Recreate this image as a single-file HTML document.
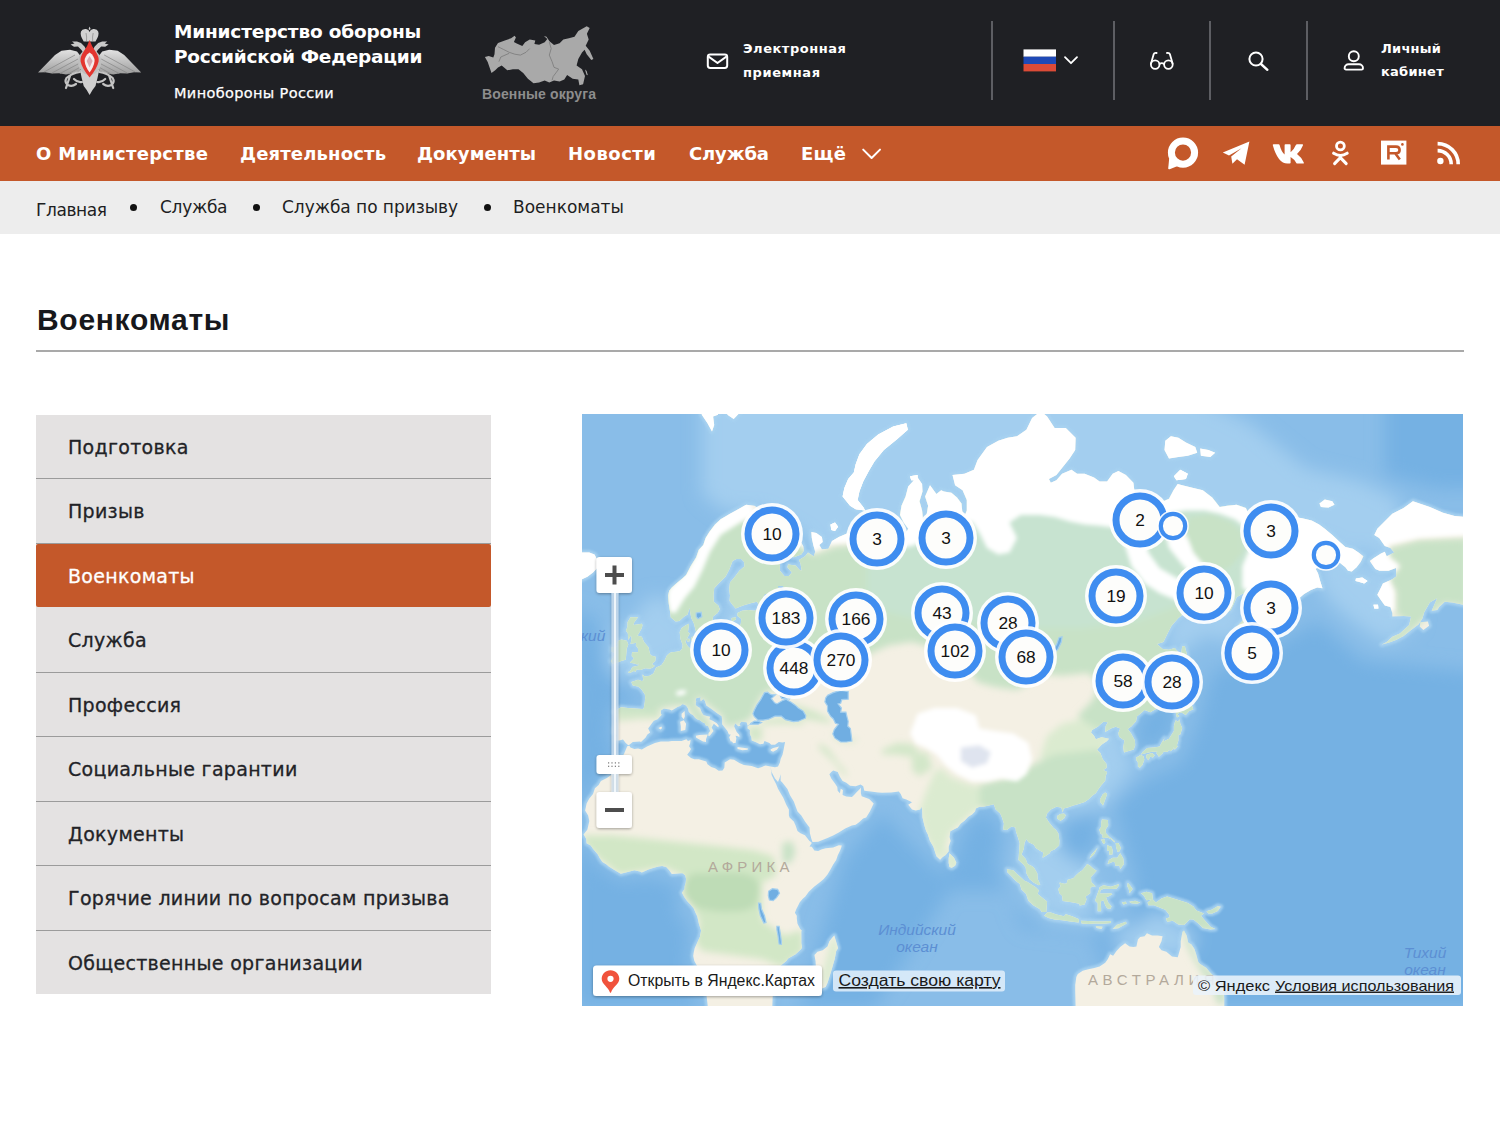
<!DOCTYPE html>
<html lang="ru">
<head>
<meta charset="utf-8">
<title>Военкоматы</title>
<style>
*{box-sizing:border-box;margin:0;padding:0}
html,body{width:1500px;height:1125px;overflow:hidden;background:#fff}
body{font-family:"DejaVu Sans","Liberation Sans",sans-serif;color:#1d1e22;position:relative}
.abs{position:absolute;white-space:nowrap}
#top{position:absolute;left:0;top:0;width:1500px;height:126px;background:#1f2024}
#nav{position:absolute;left:0;top:126px;width:1500px;height:55px;background:#c4582a}
#crumbs{position:absolute;left:0;top:181px;width:1500px;height:53px;background:#ededed}
.t{position:absolute;white-space:nowrap;line-height:1;transform-origin:0 0}
.w{color:#fff}
.bul{position:absolute;top:22.5px;width:7px;height:7px;border-radius:50%;background:#111}
.vsep{position:absolute;top:21px;width:1.6px;height:79px;background:#5d5e63}
#side{position:absolute;left:36px;top:414.7px;width:454.5px;height:579px;background:#e4e2e2}
#side .it{position:absolute;left:0;width:454.5px;height:64.5px;border-bottom:1px solid #9b9b9b}
#side .it.act{background:#c4582a;border-bottom:none;border-radius:2px;height:63.6px}
#side .it span{position:absolute;left:32px;top:23.3px;font-size:19px;line-height:1;letter-spacing:.3px;color:#222327;white-space:nowrap;-webkit-text-stroke:.3px currentColor}
#side .it.act span{color:#fff}
#map{position:absolute;left:582px;top:414px;width:881px;height:592px;overflow:hidden;background:#8fc0e6}
</style>
</head>
<body>
<div id="top">
<!--HDR--><svg width="1500" height="126" viewBox="0 0 1500 126" style="position:absolute;left:0;top:0">
<defs><linearGradient id="sg" x1="0" y1="0" x2="0" y2="1"><stop offset="0" stop-color="#e2e2e2"/><stop offset="1" stop-color="#9c9c9c"/></linearGradient></defs>
<g id="emb">
<path d="M80.5 56 L77 51.5 L70 49.8 L61.5 50.8 L55 55 L38 72.6 L45 72.2 L52 73.6 L59 73.2 L66 74.6 L73 73.2 L80 71Z" fill="url(#sg)"/>
<g transform="translate(179.2,0) scale(-1,1)"><path d="M80.5 56 L77 51.5 L70 49.8 L61.5 50.8 L55 55 L38 72.6 L45 72.2 L52 73.6 L59 73.2 L66 74.6 L73 73.2 L80 71Z" fill="url(#sg)"/></g>
<path d="M75 55 L44 72 M78 59 L52 73 M80 63 L60 73.5 M80.5 67 L68 74" stroke="#8a8a8a" stroke-width=".8" fill="none"/>
<g transform="translate(179.2,0) scale(-1,1)"><path d="M75 55 L44 72 M78 59 L52 73 M80 63 L60 73.5 M80.5 67 L68 74" stroke="#8a8a8a" stroke-width=".8" fill="none"/></g>
<path d="M85 56 L81.5 50 L78 46.5 L74 46.8 L70.6 44.4 L74.5 43.6 L72 41.6 L77 41.4 L81 43 L84.5 46.5 L87.5 52Z" fill="#c9c9c9"/>
<g transform="translate(179.2,0) scale(-1,1)"><path d="M85 56 L81.5 50 L78 46.5 L74 46.8 L70.6 44.4 L74.5 43.6 L72 41.6 L77 41.4 L81 43 L84.5 46.5 L87.5 52Z" fill="#c9c9c9"/></g>
<path d="M89.6 26.5 L90.6 29 L89.6 30 L88.6 29Z M81 31.5 Q82 28.6 86 29 Q89 29.6 89.6 32 Q90.2 29.6 93.2 29 Q97.2 28.6 98.2 31.5 Q99.6 35 95.5 41.4 L83.7 41.4 Q79.6 35 81 31.5Z" fill="#d2d2d2"/>
<path d="M86 33 Q87 37 86.5 41 M93.2 33 Q92.2 37 92.7 41" stroke="#8f8f8f" stroke-width=".8" fill="none"/>
<path d="M80 70 L99.2 70 L97.5 78 L95.5 86 L92.5 90 L89.6 95 L86.7 90 L83.7 86 L81.7 78Z" fill="#cfcfcf"/>
<path d="M80 72 Q72 73 66.5 78 Q64 82 68 85 Q72 87 76 84 M70 76 L66 88 M74 79 Q78 83 82 82" stroke="#c4c4c4" stroke-width="2.2" fill="none" stroke-linecap="round"/>
<g transform="translate(179.2,0) scale(-1,1)"><path d="M80 72 Q72 73 66.5 78 Q64 82 68 85 Q72 87 76 84 M70 76 L66 88 M74 79 Q78 83 82 82" stroke="#c4c4c4" stroke-width="2.2" fill="none" stroke-linecap="round"/></g>
<ellipse cx="89.6" cy="62" rx="11.5" ry="13" fill="#bfbfbf"/>
<path d="M89.6 40 Q91.5 46 95.5 51.5 Q99.4 57 98.6 61.5 Q97.3 68 89.6 77.6 Q81.9 68 80.6 61.5 Q79.8 57 83.7 51.5 Q87.7 46 89.6 40Z" fill="#e3352f"/>
<path d="M89.6 52.5 Q94.6 56 94.6 61 Q94 66.5 89.6 72.6 Q85.2 66.5 84.6 61 Q84.6 56 89.6 52.5Z" fill="#f4ecec"/>
<path d="M89.6 56 L92.6 61 L89.6 67.5 L86.6 61Z" fill="#d9a9b0"/>
</g>
<polygon points="484.9,57.0 488.7,56.1 493.3,57.5 494.5,54.2 495.0,47.7 498.0,43.0 505.5,40.2 511.1,38.3 514.6,35.7 515.9,37.4 513.9,42.1 516.7,43.5 522.3,46.0 525.1,42.3 529.7,39.5 535.3,40.4 534.4,43.9 539.1,44.7 544.7,42.3 547.3,39.1 543.9,36.1 546.5,36.7 549.5,41.3 554.0,45.1 559.6,43.2 563.3,39.5 568.9,38.3 574.5,36.7 578.3,31.1 586.7,26.2 589.7,28.1 586.9,33.7 588.7,39.5 585.7,45.8 589.7,50.7 593.4,58.9 591.3,60.0 586.7,54.2 584.6,49.7 582.0,52.5 578.3,58.9 576.6,65.4 582.0,69.3 585.0,75.9 583.1,84.3 579.4,85.2 578.3,79.6 572.7,78.7 567.1,74.9 564.3,79.6 559.6,81.5 554.0,80.5 549.3,82.4 544.7,80.5 539.1,82.4 533.5,83.3 527.9,78.7 523.2,73.1 518.5,69.3 512.9,69.3 507.3,70.3 501.7,65.6 498.0,67.5 495.2,70.3 491.5,73.1 489.6,67.5 487.7,61.9" fill="#a9a9a9"/>
<polygon points="585.0,69.6 586.7,71.0 587.8,75.2 586.5,74.7" fill="#a9a9a9"/>
<polyline points="498.0,46.7 503.6,49.5 509.2,52.3 514.8,54.2 520.4,55.1 526.0,52.3 529.7,48.6" fill="none" stroke="#7f7f7f" stroke-width=".9"/>
<polyline points="498.9,61.7 500.8,57.0 509.2,53.3" fill="none" stroke="#7f7f7f" stroke-width=".9"/>
<polyline points="549.3,42.1 551.2,48.6 549.3,55.1 552.1,61.7 554.0,67.3 558.7,69.1 555.9,72.9 553.1,76.6 552.1,80.3" fill="none" stroke="#7f7f7f" stroke-width=".9"/>
<rect x="707.8" y="54.6" width="19.4" height="13.4" rx="2.4" fill="none" stroke="#fff" stroke-width="2"/><path d="M708.6 56.6 L717.5 63 L726.4 56.6" fill="none" stroke="#fff" stroke-width="2" stroke-linejoin="round"/>
<rect x="1023.5" y="49.4" width="32.5" height="7.4" fill="#fff"/><rect x="1023.5" y="56.7" width="32.5" height="7.4" fill="#1f49b6"/><rect x="1023.5" y="64" width="32.5" height="7.4" fill="#dc4b37"/>
<path d="M1065 57.2 L1071 63.2 L1077 57.2" fill="none" stroke="#fff" stroke-width="1.8" stroke-linecap="round" stroke-linejoin="round"/>
<g fill="none" stroke="#fff" stroke-width="1.8" stroke-linecap="round"><circle cx="1155.2" cy="64.6" r="4.3"/><circle cx="1168.4" cy="64.6" r="4.3"/><path d="M1159.5 64 Q1161.8 62.4 1164.1 64"/><path d="M1151 63.6 L1153.6 54.4 Q1154.2 52.6 1156.6 53"/><path d="M1172.6 63.6 L1170 54.4 Q1169.4 52.6 1167 53"/></g>
<circle cx="1256" cy="59" r="6.6" fill="none" stroke="#fff" stroke-width="2"/><path d="M1261 64 L1267.4 69.8" stroke="#fff" stroke-width="2.4" stroke-linecap="round"/>
<circle cx="1353.8" cy="56.2" r="5" fill="none" stroke="#fff" stroke-width="1.9"/><path d="M1348.6 64.2 h10.4 a4 4 0 0 1 4 4 v0 a1.4 1.4 0 0 1 -1.4 1.4 h-15.6 a1.4 1.4 0 0 1 -1.4 -1.4 v0 a4 4 0 0 1 4 -4z" fill="none" stroke="#fff" stroke-width="1.9"/>
</svg><!--/HDR-->
  <div class="t w" id="h1a" style="left:174px;top:22.6px;font-size:18.5px;font-weight:bold;letter-spacing:-.19px">Министерство обороны</div>
  <div class="t w" id="h1b" style="left:174px;top:48.3px;font-size:18.5px;font-weight:bold;letter-spacing:-.27px">Российской Федерации</div>
  <div class="t w" id="h2" style="left:174px;top:85.5px;font-size:14.5px;letter-spacing:.35px;-webkit-text-stroke:.25px #fff">Минобороны России</div>
  <div class="t" id="vo" style="left:482px;top:87px;font-size:14px;font-weight:bold;color:#8d8d8d;font-family:'Liberation Sans',sans-serif;letter-spacing:.13px">Военные округа</div>
  <div class="t w" id="ep1" style="left:743px;top:42px;font-size:13px;font-weight:bold;letter-spacing:.54px">Электронная</div>
  <div class="t w" id="ep2" style="left:743px;top:66px;font-size:13px;font-weight:bold;letter-spacing:.58px">приемная</div>
  <div class="vsep" style="left:991px"></div>
  <div class="vsep" style="left:1113px"></div>
  <div class="vsep" style="left:1209px"></div>
  <div class="vsep" style="left:1306px"></div>
  <div class="t w" id="lk1" style="left:1381px;top:42px;font-size:13px;font-weight:bold;letter-spacing:.26px">Личный</div>
  <div class="t w" id="lk2" style="left:1381px;top:65px;font-size:13px;font-weight:bold;letter-spacing:.26px">кабинет</div>
</div>
<div id="nav">
<!--NAV--><svg width="1500" height="55" viewBox="0 126 1500 55" style="position:absolute;left:0;top:0">
<path d="M863.2 149.6 L871.6 158 L880 149.6" fill="none" stroke="#fff" stroke-width="2" stroke-linecap="round" stroke-linejoin="round"/>
<circle cx="1183" cy="152.6" r="11.6" fill="none" stroke="#fff" stroke-width="7"/><path d="M1169.2 158 L1168.2 168.6 Q1168.4 169.6 1169.6 169.2 L1179 165.6Z" fill="#fff"/>
<path d="M1222.8 152.4 L1249.400 141.6 L1244.600 164.8 L1237 159.2 L1232.400 163.8 L1231.200 156.600 L1241.500 148.200 L1229 155.400Z" fill="#fff"/>
<path d="M1273 144.2 h5.6 q.8 0 1 .8 q1.6 6.4 5 9.6 v-9.6 q0 -.8 .8 -.8 h4.4 q.8 0 .8 .8 v7.2 q3.4-2.6 5.4-7.4 q.3-.6 1-.6 h5.2 q1.2 0 .8 1.1 q-1.6 4.6-6 8.7 q4.8 3.6 6.8 8.4 q.4 1.2 -.8 1.2 h-5.6 q-.8 0 -1.1 -.6 q-2 -3.8 -5.7 -6 v5.8 q0 .8 -.8 .8 h-2.4 q-9.400 0 -14.600 -18.400 q-.3 -1 .8 -1z" fill="#fff"/>
<circle cx="1340.4" cy="146" r="3.9" fill="none" stroke="#fff" stroke-width="2.8"/><path d="M1333.6 153.2 Q1340.4 157.6 1347.2 153.2 M1340.4 156 L1340.4 158.4 M1340.4 157.6 L1334.6 163.6 M1340.4 157.6 L1346.200 163.6" fill="none" stroke="#fff" stroke-width="3" stroke-linecap="round"/>
<rect x="1381" y="140.6" width="25.4" height="24" fill="#fff"/><path d="M1388.4 159.4 V146.6 H1396 Q1399.6 146.6 1399.6 150 Q1399.6 153.2 1396 153.2 H1388.4 M1395.4 153.4 L1399.8 159.4" fill="none" stroke="#c4582a" stroke-width="2.6"/><circle cx="1402.400" cy="144.4" r="1.3" fill="#c4582a"/>
<circle cx="1440.400" cy="161" r="3.2" fill="#fff"/><path d="M1437.600 150.6 A13.6 13.6 0 0 1 1451.200 164.2 M1437.600 143.6 A20.600 20.600 0 0 1 1458.200 164.2" fill="none" stroke="#fff" stroke-width="3.6"/>
</svg><!--/NAV-->
  <div class="t w" id="n1" style="left:36px;top:19px;font-size:18px;font-weight:bold;letter-spacing:.3px">О Министерстве</div>
  <div class="t w" id="n2" style="left:240px;top:19px;font-size:18px;font-weight:bold;letter-spacing:.16px">Деятельность</div>
  <div class="t w" id="n3" style="left:417px;top:19px;font-size:18px;font-weight:bold;letter-spacing:.07px">Документы</div>
  <div class="t w" id="n4" style="left:568px;top:19px;font-size:18px;font-weight:bold;letter-spacing:.5px">Новости</div>
  <div class="t w" id="n5" style="left:689px;top:19px;font-size:18px;font-weight:bold;letter-spacing:-.15px">Служба</div>
  <div class="t w" id="n6" style="left:801px;top:19px;font-size:18px;font-weight:bold;letter-spacing:.3px">Ещё</div>
</div>
<div id="crumbs">
  <div class="t" id="c1" style="left:36px;top:21px;font-size:17px;letter-spacing:-.4px">Главная</div>
  <div class="bul" style="left:129.5px"></div>
  <div class="t" id="c2" style="left:160px;top:18px;font-size:17px;letter-spacing:-.3px">Служба</div>
  <div class="bul" style="left:252.5px"></div>
  <div class="t" id="c3" style="left:282px;top:18px;font-size:17px;letter-spacing:-.05px">Служба по призыву</div>
  <div class="bul" style="left:483.5px"></div>
  <div class="t" id="c4" style="left:513px;top:18px;font-size:17px">Военкоматы</div>
</div>
<div class="t" id="title" style="left:37px;top:305px;font-size:30px;font-weight:bold;color:#17181c;font-family:'Liberation Sans',sans-serif;letter-spacing:.7px">Военкоматы</div>
<div class="abs" style="left:36px;top:350px;width:1428px;height:2px;background:#a9a9a9"></div>
<div id="side">
  <div class="it" style="top:0"><span id="s1">Подготовка</span></div>
  <div class="it" style="top:64.5px"><span id="s2">Призыв</span></div>
  <div class="it act" style="top:129.0px"><span id="s3">Военкоматы</span></div>
  <div class="it" style="top:193.5px"><span id="s4">Служба</span></div>
  <div class="it" style="top:258.0px"><span id="s5">Профессия</span></div>
  <div class="it" style="top:322.5px"><span id="s6">Социальные гарантии</span></div>
  <div class="it" style="top:387.0px"><span id="s7">Документы</span></div>
  <div class="it" style="top:451.5px"><span id="s8">Горячие линии по вопросам призыва</span></div>
  <div class="it" style="top:516.0px;height:63px;border-bottom:none"><span id="s9">Общественные организации</span></div>
</div>
<div id="map">
<svg width="881" height="592" viewBox="582 414 881 592" style="position:absolute;left:0;top:0;display:block" font-family="'Liberation Sans',sans-serif">
<defs>
<filter id="b2" x="-10%" y="-10%" width="120%" height="120%"><feGaussianBlur stdDeviation="2"/></filter>
<filter id="b3" x="-10%" y="-10%" width="120%" height="120%"><feGaussianBlur stdDeviation="3.5"/></filter>
<filter id="b8" x="-20%" y="-20%" width="140%" height="140%"><feGaussianBlur stdDeviation="9"/></filter>
<filter id="b1" x="-10%" y="-10%" width="120%" height="120%"><feGaussianBlur stdDeviation="1.2"/></filter>
<filter id="sh" x="-20%" y="-20%" width="140%" height="150%"><feGaussianBlur in="SourceAlpha" stdDeviation="1.5"/><feOffset dy="1"/><feComponentTransfer><feFuncA type="linear" slope=".35"/></feComponentTransfer><feMerge><feMergeNode/><feMergeNode in="SourceGraphic"/></feMerge></filter>
<path id="land" d="M628.3,745.2 625.7,742.9 623,739.6 619.3,740.6 615.5,740.6 616.3,734.9 614,732.5 614.4,728.6 616.7,720.7 615.9,715.2 614.4,711.7 617.8,709.1 621.2,707.3 627.9,708 635,708.6 642.5,709.1 643.7,708.6 644.8,702.3 645.2,697.5 644.8,694.3 641,688.8 638,686.6 632.8,685.5 631.3,682.1 638,679.8 641.8,681 643.3,680.4 642.5,674.6 644.8,676.4 649.7,675.8 653.4,673.5 655.3,669.4 656.1,667.6 661.3,665.2 664.3,661 666.9,655.4 669.6,652.9 671.8,652.3 676.3,651.7 680.1,651 681.9,649.1 682.7,645.3 681.6,642 680.4,638.7 679.7,632 681.6,627.9 686.1,625.1 689.1,623.7 688,632 689.8,633.4 686.8,638.7 685.3,642 687.6,645.9 690.2,648.5 694.7,647.2 700,645.3 703,648.5 711.2,645.3 718,643.3 719.1,645.9 724.3,644 728.5,637.4 728.1,632 730,625.8 734.1,623.7 736.7,627.9 739.4,628.6 740.9,623 741.2,618.8 737.5,615.9 737.5,613 742,610.8 748.7,610 754.4,610.8 760,607.8 762.6,607.8 759.2,605.5 757,601.7 750.6,603.3 743.1,605.5 735.6,608.6 731.9,604 729.6,601 730,595.5 729.2,589.2 730,582.6 734.9,576.7 739.4,570.7 744.6,566.3 743.9,561.8 741.2,559.1 736.4,559.1 732.6,560.9 729.2,569.8 725.5,576.7 719.5,582.6 714.2,588.3 713.5,595.5 713.8,601.7 718.3,605.5 719.8,609.3 717.6,613 713.1,616.6 712,623 710.8,630.7 707.8,634.1 704.1,634.7 702.6,639.4 698.1,639.4 697,635.4 696.2,632.7 694,623.7 691.3,618.1 690.6,614.4 689.5,607.8 687.6,614.4 684.2,616.6 679.3,620.9 675.6,621.6 670.7,617.3 670.3,613 668.8,604 668.1,595.5 669.2,590.8 671.8,587.5 677.4,582.6 682.3,578.4 686.1,575 690.6,566.3 696.2,557.3 698.8,549.8 703.3,545 705.6,538 709.3,532 715,524.6 720.6,519.3 726.2,516 730,513.8 738.2,509.3 746.1,504.7 754.4,505.8 760,509.3 765.6,512.7 760,518.2 765.6,520.4 771.3,520.4 775,523.6 784.4,526.8 791.9,533 798.3,538 803.2,545.9 803.9,550.7 801.3,554.5 793.8,557.3 786.3,554.5 780.6,551.7 776.1,549.8 771.3,546.9 773.9,552.6 776.9,557.3 779.9,564.5 779.9,570.7 784.4,575.9 788.9,575.9 791.9,572.4 787.4,567.2 788.1,564.5 795.6,565.4 799.4,569.8 801.7,570.7 800.5,563.6 799,560 805,556.3 808,552.6 813.7,556.3 815.2,551.7 813.3,545 811.8,538 811.4,532 816.3,533 821.9,537 822.7,542 819.3,545 821.9,549.3 828.3,548.8 832,541 838.8,537 848.2,533 851.9,536 855.7,533 863.2,532 870.7,528.8 876.3,520.4 874.4,517.1 880.1,519.3 891.3,524.6 895.1,528.3 900,532 904.5,535 908.2,528.8 903.7,522.5 900,514.9 901.5,505.8 905.6,496.4 908.2,486.6 913.9,480.2 917.6,477.6 922.1,484.1 922.5,491.6 919.5,501.2 922.1,510.4 923.2,521.4 925.9,529.9 924,536 920.6,545 917.6,549.8 920.6,552.6 925.1,547.9 929.2,540 930,532 934.5,527.8 940.1,533 942,541 945,541 944.2,532 940.1,525.7 935.6,520.4 927.7,524.6 926.2,517.1 928.1,505.8 925.1,496.4 930,485.3 936.4,494 941.2,490.3 943.9,491.6 951.4,492.8 957,497.6 961.5,503.5 962.3,511.5 964.5,516 966.8,510.4 966.8,500 962.6,490.3 955.1,485.3 952.5,475 964.5,473.7 973.9,469.7 977.6,460 987,446.9 998.3,440.8 1007.7,437.7 1017,436.2 1026.4,429.8 1032.1,418.1 1040.7,411.2 1047.1,416.4 1054.6,428.1 1065.8,428.1 1075.6,437.7 1075.2,449.9 1069.6,458.6 1064,465.6 1056.4,475 1048.9,478.9 1050.8,482.8 1056.4,480.2 1062.1,473.7 1071.5,469.7 1077.1,473.7 1084.6,473.7 1094,477.6 1099.6,481.5 1107.1,481.5 1112.7,473.7 1118.4,471 1125.9,475 1133.4,482.8 1134.5,491.6 1131.5,497.6 1135.2,503.5 1140.9,507 1145.4,500 1150.3,500 1155.9,498.8 1163.4,501.2 1169,498.8 1173.5,490.3 1177.7,484.1 1182.2,485.3 1193.4,487.9 1202.8,490.3 1212.2,497.6 1219.7,507 1227.2,505.8 1236.6,504.7 1245.9,508.1 1251.6,520.4 1257.2,521.4 1264.7,520.4 1274.1,522.5 1280.8,517.1 1285.3,521.4 1288,527.8 1290.2,519.3 1294.7,517.1 1302.2,518.2 1311.6,520.4 1319.1,524.6 1324.8,528.8 1332.3,535 1339.8,542 1345.4,546.9 1352.9,548.8 1358.5,552.6 1363.4,556.3 1360.8,561.8 1356.6,567.2 1351.8,571.6 1348,570.7 1345.4,567.2 1339.8,562.7 1334.1,561.8 1330.4,555.4 1327.8,553.5 1325.9,560.9 1321,564.5 1315.7,569 1318,573.3 1320.2,580.9 1322.5,588.3 1317.2,587.5 1310.9,590 1304.1,594 1297.7,599.4 1292.9,604 1288.4,607.8 1281.6,603.3 1273.3,606.3 1267.7,607.8 1262.5,613 1260.6,620.9 1258,623 1261,628.6 1262.1,634.1 1258,635.4 1256.8,642 1250.8,647.2 1249.3,653.6 1244.8,655.4 1243.3,661.6 1240.3,665.2 1237.3,667.6 1235.4,661 1233.6,648.5 1233.6,635.4 1236.9,626.5 1242.2,620.9 1248.6,610.8 1255.3,603.3 1261,595.5 1267,587.5 1262.1,588.3 1259.1,594.7 1252,601.7 1249.7,595.5 1250.8,592.4 1242.2,594 1236.9,597.1 1230.9,610 1224.6,613.7 1215.2,610 1208.4,610.8 1197.2,612.3 1186.7,611.5 1178.4,618.1 1171.6,625.8 1167.9,632.7 1163.4,642 1157,644 1162.6,649.1 1169,649.8 1174.7,647.9 1179.5,653.6 1178.8,659.1 1177.3,665.2 1176.2,672.9 1175.8,678.7 1171.6,686.6 1169,692.1 1163.4,698.6 1159.6,703.9 1155.9,709.1 1150.3,712.2 1144.6,710.1 1140.9,713.2 1137.1,716.2 1136,721.2 1131.5,726.2 1127.7,729.1 1131.1,733.4 1134.9,740.6 1135.2,745.2 1133.7,749.4 1129.6,750.8 1124,752.6 1123.2,747.5 1124.4,740.6 1119.1,736.8 1118.4,733 1120.2,728.6 1115.7,726.7 1110.9,728.6 1105.2,732 1105.6,726.2 1107.9,722.2 1103.4,721.7 1097.7,726.7 1092.1,730.1 1091,732.5 1094,735.8 1095.8,739.2 1101.5,737.3 1109,738.7 1107.1,741 1101.5,744.8 1097,749.8 1100.4,753 1102.6,758.9 1106.4,763.8 1106.7,767.7 1103.4,769.9 1107.1,772.1 1105.6,776.4 1105.2,780.7 1101.5,784.9 1098.5,789.1 1095.8,793.3 1092.8,795.3 1088.3,799.4 1084.6,801.9 1077.8,804.3 1073.3,805.5 1067.7,807.6 1063.6,808.4 1062.8,812.4 1061.3,807.6 1056.4,806.8 1050.8,809.6 1047.1,813.6 1045.9,817.6 1048.9,822.3 1053.8,828.2 1055.7,829.4 1058.3,833.3 1059.4,841 1059.1,845.6 1054.6,849.4 1050.8,851 1049.7,853.2 1045.2,856.3 1042.6,857.8 1043.3,852.5 1039.6,850.6 1035.8,847.9 1033.9,844.8 1028.3,842.1 1026.4,839.1 1024.5,842.9 1023.8,848.7 1021.5,854.4 1025.7,858.9 1027.6,863.9 1031.3,865.8 1033.9,867.6 1037.3,873.3 1037.7,878.9 1040.3,884.6 1038.8,885.3 1033.9,882.7 1029.4,878.9 1026.4,873.3 1025.7,867.6 1023.4,864.6 1018.5,860.1 1018.9,854.4 1019.3,848.7 1019.7,842.9 1017.8,837.1 1015.9,831.3 1015.5,827.4 1011.4,826.6 1006.9,830.1 1003.2,829.4 1003.9,823.5 1002,817.6 1000.2,813.6 995.7,809.6 993.8,804.3 988.9,805.5 983.3,806.8 979.5,806.8 975.8,808.4 975,811.6 972,814.4 968.3,816.8 964.5,820.7 960.8,823.5 957.8,827.4 953.3,829.8 950.3,831.3 949.5,837.1 950.6,841 948.7,846.8 948.7,851.3 945.7,855.1 942.7,857 940.1,859.7 936.4,856.3 935.2,852.5 933.4,846.8 930,841 927.7,834 926.2,831.3 924.4,825.5 922.5,817.6 922.1,809.6 921.4,806.8 920.2,809.6 915.7,810.4 912,809.6 908.2,804.7 912,802.3 906.3,799.4 902.6,798.2 900.7,794.1 898.8,791.6 891.3,792.4 882,792.8 878.2,792.4 870.7,791.6 864.3,790.8 863.2,786.2 860.6,784.5 855.7,786.2 850.1,785.8 846.3,782.8 842.6,781.1 839.9,776.8 837.7,772.1 833.2,770.4 831.3,772.1 829.4,774.3 831.3,778.6 835,783.6 837.3,787 837.7,790.8 839.9,793.3 840.7,788.7 842.9,789.9 842.6,794.9 846.3,796.6 851.9,797 853.8,795.3 856.8,792 859.8,789.1 860.9,787.4 860.9,793.3 861.7,796.2 869.2,799 873.7,803.5 869.9,811.6 866.2,817.6 863.2,818.4 859.4,821.9 855.7,824.7 851.9,825.5 845.2,828.6 838.8,832.5 833.2,835.6 827.5,837.9 820,841 818.2,841.8 812.5,842.1 811.4,839.1 809.9,833.3 809.5,827.4 805,821.5 801.3,815.6 797.5,811.6 796,807.6 793.8,801.5 790,795.3 787.4,789.1 782.5,782.8 780.6,780.7 780.6,774.3 779.5,778.6 778,782 775,778.6 771.6,772.1 770.5,766.4 775,767.3 778,766.4 779.9,762.5 780.6,758.9 782.5,754.8 783.6,749.8 784.4,745.2 785.1,742 782.5,742.4 778.8,742 775,744.8 771.3,744.8 769.4,742.9 764.5,741 763.4,743.8 760,744.3 755.5,742 751.7,740.6 751.4,737.3 749.9,733.9 749.9,730.1 747.6,728.6 747.6,726.2 750.6,724.2 754.4,724.2 758.1,724.2 761.5,722.7 758.1,721.2 757.7,721.2 754.4,721.2 751.7,722.7 749.5,724.2 747.6,725.7 746.9,723.2 746.5,722.2 741.2,721.7 739.4,724.2 740.5,725.7 738.2,726.2 736.7,724.7 735.2,723.2 734.1,726.2 735.6,729.6 736.7,732 739.4,734.9 739.4,737.3 737.9,736.3 735.6,735.8 736.4,738.2 735.6,742.9 733.7,742.9 733.4,743.4 731.9,741.5 730.7,741.5 729.2,737.3 730.7,734.4 728.9,734.4 727.4,731 725.1,728.1 722.1,724.2 722.1,719.7 721.7,716.2 718.7,714.2 717.2,713.2 710.8,708.6 706.3,705.4 704.8,700.7 703.3,699.1 700.7,701.2 700.3,698 701.1,697 695.5,698.6 696.2,701.2 695.5,704.4 696.6,706 700,708 701.8,712.7 703.7,715.2 710.1,716.7 709.3,719.2 712.7,720.7 716.8,723.2 718.7,725.7 718.3,727.2 716.8,726.2 713.8,723.7 711.6,727.6 713.5,731 711.2,733.9 709.7,735.8 708.2,735.8 708.6,733 710.1,731 708.2,726.2 705.6,725.2 704.8,723.2 702.6,722.2 700,720.2 697,719.2 695.1,717.7 693.2,715.2 690.6,713.7 688.7,711.7 688,708.6 686.1,705.4 682.7,703.9 680.1,706 677.4,707 676.7,707.5 671.8,710.6 669.6,709.6 666.6,709.1 663.9,708.6 660.9,710.6 660.9,713.7 661.7,714.7 657.6,719.2 653.8,720.7 652.3,722.7 648.2,728.6 650.1,732.5 647.4,734.4 645.5,737.7 641,742 639.9,741.5 632.8,742 629.4,744.8ZM770.5,766.4 765.6,765.5 761.9,766.9 758.1,768.2 751.7,766 743.9,765.1 739.4,762.9 734.1,759.8 730,759.3 724.7,762.5 724.3,767.7 722.5,770.4 718.7,770.8 715,768.2 711.2,766.9 707.5,764.2 706.3,761.6 698.8,759.3 694.3,759.3 691,758 687.2,754.8 689.8,751.2 691,748.9 689.1,746.2 690.2,742.9 690.6,740.1 688,741 686.4,739.2 681.6,741 678.6,741 671.8,741 668.4,741.5 660.9,741.5 654.9,742.9 647,746.6 641.8,749.4 638,748.5 634.3,748.9 630.5,747.5 629.4,745.7 627.2,746.2 625.7,749.8 623.8,754.4 620.8,756.2 616.7,758.9 614.4,762 612.5,765.5 613.3,770.4 611,775.1 606.9,778.1 600.9,781.1 598.6,784.9 594.9,788.3 593,794.1 589.3,798.6 586.6,803.5 585.1,810.4 588.1,815.6 589.3,821.1 587.4,829.4 583.6,834.4 586.3,839.1 586.6,843.3 590.8,845.6 593,848.7 597.9,854.4 599.8,858.2 602.4,862 606.5,864.6 608.8,866.5 614.4,869.9 620.8,873.7 626.8,872.2 634.3,870.3 639.9,871.4 641.8,872.4 648.5,869.5 653.1,868 658.3,866.5 662.1,866.1 666.2,866.9 669.2,870.3 671.8,874 675.6,873.7 680.4,873.3 682.7,873.3 685.3,875.6 686.1,878.9 685.7,882.7 684.6,886.4 684.6,888.7 681.9,892.8 684.2,897 686.8,900.7 690.6,904.8 693.6,908.2 695.5,912.8 697.3,916.5 698.8,923.4 701.1,930.6 700,936.7 694.7,947.9 693.6,953 693.2,956.1 694.3,960.9 699.6,970.4 703.7,978.5 704.8,987.1 706.3,993.8 711.2,1035.2 771.3,1035.2 772.8,993.4 771.6,991.3 772.8,988.4 781.8,983 782.5,982.2 782.1,974.9 780.3,966 786.3,960.9 788.1,958.5 795.6,954.2 801.3,949.1 802,947.1 801.3,943.3 801.3,939.4 801.3,931.7 801.7,930.6 800.2,929.1 797.5,923.7 796.8,918.4 796.8,915.8 794.9,912.8 796.4,909 798.3,905.2 799.8,902.2 802.8,898.8 805.4,896.6 808.8,891.7 814.4,886.4 819.3,882.7 823.8,878.9 827.5,874.4 830.5,869.5 833.2,864.6 836.2,860.1 837.7,855.5 839.9,851 841.1,847.9 841.8,845.6 838.8,845.2 833.2,847.5 825.7,848.3 821.2,849.4 818.2,851 814.4,850.6 811.8,846.8 809.5,846.4 811.8,842.9 811,842.1 809.5,841 805,835.2 800.5,833.3 797.5,830.9 795.6,825.5 793.8,821.5 789.6,817.6 788.9,815.2 788.9,809.6 786.3,804.7 783.3,797.8 780.6,793.3 778,788.7 776.1,784.1 773.9,779.8 771.6,775.1 771.3,772.1ZM627.9,672.3 630.5,670.6 632.4,667 638,665.8 639.2,663.4 637.3,664.6 634.3,663.4 629.8,662.8 633.9,658.5 631.7,656.1 632,652.3 638,652.3 638,648.5 635.8,645.3 636.2,642.7 630.5,644 631.7,638.7 630.9,635.4 628.3,640.1 627.9,633.4 626,630.7 627.5,626.5 627.5,622.3 630.5,617.3 638,617.3 634.3,622.3 633.5,625.1 641.8,623.7 642.5,625.1 641.8,627.9 638.8,633.4 637.3,635.4 641.8,636.8 644,642 648.5,647.2 649.3,651 650.4,654.8 651.2,655.4 655.7,656.7 655.3,661 651.9,664 654.6,665.8 654.2,666.4 652.7,667.6 650.1,668.8 645.2,668.2 641.8,669.4 640.3,670 636.5,669.4 635.8,671.7 633.9,671.1 629.8,672.9ZM621.5,639.4 626.8,640.7 628.3,644.6 626.8,648.5 626.4,652.9 625.7,659.8 621.2,661 618.2,662.2 612.5,664 611,661 613.3,657.3 615.5,653.6 611.8,651.7 611.8,647.2 617.4,646.6 616.7,643.3 618.2,640.7ZM566.7,553.5 581.8,552.6 589.3,552.6 594.5,554.5 598.3,561.8 597.9,567.2 593,572.4 587.4,576.7 579.9,580.1 566.7,576.7ZM700,387 701.8,414.7 707.5,423.2 712,431.4 714.2,424.9 713.1,416.4 718,414.7 719.1,402.2 728.1,400.4 727.4,414.7 733.7,419 739.4,413 743.1,400.4 739.4,387 716.8,377ZM865.1,510.4 855.7,509.3 850.1,505.8 842.6,496.4 844.4,487.9 848.2,478.9 853.8,472.4 855.7,464.2 859.4,454.3 866.9,443.9 878.2,434.6 893.2,426.5 906.3,423.2 907.8,429.8 897,439.3 883.8,449.9 874.4,461.4 868.8,471 863.2,481.5 859.4,491.6 857.6,500 863.2,507ZM830.5,524.6 835,522.5 838.1,526.8 835,530.9 831.3,529.9ZM869.6,513.8 875.2,513.8 876.3,519.3 871.4,520.4ZM910.1,476.3 917.6,475 917.6,480.2 911.2,480.2ZM1165.3,440.8 1170.9,436.2 1178.4,437.7 1185.9,442.4 1195.3,446.9 1197.2,452.8 1187.8,455.7 1178.4,457.1 1169,458.6 1164.5,449.9ZM1200.2,448.4 1208.4,449.9 1215.2,452.8 1210.3,457.1 1200.9,455.7ZM1173.9,476.3 1180.3,469.7 1187.8,473.7 1185.9,478.9 1176.5,480.2ZM1319.5,503.5 1324.8,499.4 1332.3,501.2 1334.5,504.7 1328.5,507.6 1321,507ZM1182.2,646.6 1184.8,645.9 1187,654.8 1186.7,664 1189.7,675.8 1192.3,681 1185.9,677.5 1185.2,687.1 1187.8,691.5 1187.4,695.4 1184.8,691.5 1182.2,695.4 1182.2,687.1 1182.5,678.7 1182.2,670 1181,661 1181.4,651.7ZM1181.9,699.5 1185.1,704 1188.9,705.9 1191.8,704.9 1193.3,709.4 1189.2,711.1 1185.7,715 1181.6,712.4 1179.2,712.9 1177.2,714.2 1179.5,715.9 1176.9,717.6 1175.7,712.4 1177.8,709.4 1180.1,709.4 1181,704ZM1179.5,719.2 1180.3,723.7 1182.2,728.1 1180.3,734.4 1178.4,734.9 1178.4,740.6 1176.9,745.2 1177.7,746.6 1174.7,749.8 1173.9,747.1 1173.5,748.9 1170.5,751.2 1169,749.8 1167.9,751.7 1163.4,751.7 1163,753 1158.9,756.7 1156.3,753 1157.4,751.7 1152.1,751.7 1146.5,753 1140.9,754.4 1142.8,751.7 1147.3,748 1153.3,747.5 1157,747.1 1159.6,746.6 1162.3,741.5 1164.5,738.2 1163.4,741.5 1169,738.7 1170.9,735.8 1173.9,731 1173.9,726.2 1174.7,722.7 1175.8,720.2 1178,721.7ZM1140.5,754.8 1143.5,756.2 1144.3,759.8 1142.4,765.1 1139.8,767.7 1137.9,766.4 1137.9,762.5 1136.4,760.2 1136,757.5 1138.6,756.2ZM1146.5,754.8 1152.1,753 1154.8,755.3 1152.9,757.5 1150.3,756.7 1148.4,760.2 1146.1,757.5ZM1105.2,792.4 1107.1,794.1 1105.2,799.4 1103,805.5 1100.4,802.3 1100,799.4 1102.6,794.5ZM1064,813.6 1065.8,815.2 1064,818.4 1060.6,820.7 1057.2,818.7 1057.2,816 1060.2,814ZM949.5,853.2 954,857.8 956.3,862.7 955.1,865.8 951.8,867.8 949.5,866.9 948.7,863.1 948.7,858.2ZM1101.9,819.5 1107.9,819.9 1108.2,825.5 1105.6,829.4 1106,833.3 1109,836.4 1114.6,841 1114.6,842.5 1110.9,839.1 1107.1,837.5 1103.4,838.3 1101.9,836.4 1103,834.8 1100.7,834 1099.2,829.4 1101.1,827 1101.1,823.5ZM1101.1,839.5 1104.9,839.5 1105.2,842.9 1103.4,844.1 1102.2,841.8ZM1097.7,847.5 1094,854.4 1089.5,858.6 1091.3,854.8 1095.8,849.8ZM1118.4,842.9 1121,847.9 1119.1,851.7 1117.6,852.1 1116.1,847.1 1115.7,842.9ZM1107.1,845.2 1111.6,846.8 1112.7,850.6 1112.4,854.4 1109.4,854.8 1109,850.6 1107.1,850.6ZM1120.2,853.2 1123.2,858.2 1124,863.9 1122.1,866.5 1120.2,869.2 1119.5,865.8 1115.4,865.8 1114.6,862 1112.4,862 1107.5,863.9 1109,860.1 1112.7,857.8 1117.2,857.8ZM1059.4,882.7 1060.6,886.4 1058.3,889.1 1059.4,893.2 1062.1,895.8 1062.8,901.1 1068.5,901.8 1073.3,902.6 1079.3,903.7 1079.7,905.6 1084.6,904.5 1086.5,899.6 1085.7,896.6 1090.2,893.2 1090.2,888.3 1092.1,886.4 1095.8,886.4 1091.3,881.9 1091,877.1 1094,873.7 1096.6,870.7 1093.2,868.4 1090.2,865.8 1087.2,863.9 1084.6,867.6 1082.3,870.3 1079,872.5 1076,875.2 1073.3,878.2 1067.7,879.7 1066.6,883.4 1064,883.8 1060.6,882.7ZM1006.9,869.2 1013.3,870.3 1017,874 1019.7,876.3 1024.5,880.8 1027.6,881.9 1030.2,883.8 1035.8,887.2 1038.8,890.2 1037.7,894 1041.4,897 1047.1,901.5 1046.7,907.1 1046.3,912 1041.8,912 1039.6,909 1033.2,905.2 1028.3,900.7 1026.1,894 1021.5,889.4 1019.7,883.8 1015.5,880.8 1011.4,876.3 1007.3,872.2ZM1044.1,915.8 1047.1,912.4 1050.8,912.4 1056.4,914.6 1064,916.2 1065.8,914.3 1072.2,916.2 1079,919.2 1078.6,922.6 1072.2,921.8 1062.1,920.3 1054.6,919.6 1048.6,918ZM1080.8,920.7 1088.3,921.1 1095.8,921.5 1103.4,921.5 1110.9,921.1 1110.9,923 1103.4,923.7 1095.8,923.4 1088.3,924.1 1081.6,923.4ZM1112.7,929.1 1116.5,924.9 1125.9,921.8 1126.6,923.4 1118.4,928.3ZM1095.8,926 1102.6,926.8 1101.5,929.1 1096.6,927.9ZM1099.6,887.2 1103.4,885.3 1110.9,886.8 1118.4,884.2 1119.1,885.3 1116.5,888.7 1110.9,889.1 1103.4,888.7 1100.4,890.6 1100,893.6 1105.2,893.6 1110.9,893.2 1112.4,894.3 1109,896.2 1106,897.3 1108.2,902.6 1111.6,906.4 1110.1,909 1107.1,908.2 1105.2,905.2 1103.4,900.3 1100.7,901.5 1101.1,908.2 1101.1,911.2 1097.7,911.2 1097.7,903.3 1095.1,900.7 1097,895.1 1098.8,890.2ZM1127.7,882.7 1130.4,885.7 1132.6,889.1 1129.6,893.2 1128.5,888.3 1127.4,886.4ZM1129.2,901.8 1135.2,900.7 1140.1,902.6 1137.1,903.7 1131.5,903.3ZM1122.1,902.2 1125.9,901.8 1126.6,903.7 1123.2,904.5ZM1140.9,893.2 1146.5,891.7 1152.1,893.2 1152.9,899.6 1155.9,902.6 1161.5,898.5 1167.1,896.6 1178.4,900 1187.8,903 1193.4,906.4 1196.4,910.5 1203.9,913.5 1200.9,915.8 1204.7,920.3 1210.3,926.4 1215.2,929.1 1210.3,929.4 1202.8,927.9 1199,924.1 1193.4,919.6 1189.7,919.2 1187,922.2 1184,924.9 1178.4,924.5 1172.8,920.7 1167.1,921.8 1166,918.4 1169.8,917.3 1169,914.6 1165.3,909.7 1159.6,907.5 1154,905.2 1148.4,905.2 1147.6,902.6 1151.4,899.6 1146.5,900.3 1143.9,895.8ZM1206.5,911.2 1212.2,909.4 1217.8,906 1220.8,906.7 1217.8,910.9 1212.2,913.5 1208.4,913.5ZM1075.2,991.3 1075.2,985.1 1076.3,976.9 1077.8,974.1 1082.7,970.8 1088.3,969.2 1094.3,968 1099.6,966.4 1105.2,962.8 1107.9,958.9 1110.1,954.2 1113.1,955.7 1116.5,951 1120.2,947.1 1125.1,943.3 1129.6,946.4 1133.4,947.1 1136.4,946.4 1137.9,939.4 1140.1,937.1 1144.6,936.3 1146.9,933.3 1152.1,935.6 1157.8,935.6 1162.6,936.3 1161.5,941.3 1158.9,947.1 1161.5,950.3 1166.4,951.8 1172,956.5 1177.7,957.3 1178.4,954.9 1180.7,947.1 1180.7,941.3 1181.4,937.5 1182.5,931.7 1184,930.6 1186.7,935.6 1188.2,942.5 1191.5,944.4 1194.5,949.1 1196.4,954.9 1198.3,962 1200.2,964 1206.5,968 1209.2,971.6 1214.8,977.3 1215.9,982.2 1221.6,987.1 1223.8,991.3 1224.2,997.6 1224.6,1035.2 1076.3,1035.2ZM834.3,935.6 838.1,948.3 836.2,951 834.7,958.9 831.3,970.8 827.5,983 825.7,987.1 820,989.2 814.4,987.1 812.2,981 811.8,974.9 815.9,966.8 815.5,960.9 814.4,954.9 817.4,951.8 822.7,950.3 827.5,946.4 829.4,941.3 832.4,937.5ZM1467.3,517.1 1454.6,516 1443,512.7 1429.8,507 1412.9,501.2 1403.6,508.1 1392.3,513.8 1377.3,528.8 1374.3,535 1379.2,538 1384.8,545.9 1390.4,547.9 1394.2,552.6 1386.7,556.3 1384.8,551.7 1381,553.5 1373.5,558.2 1369.8,560.9 1375.4,569 1379.5,570.7 1388.5,570.7 1396,568.1 1396,575 1396.8,575.9 1392.3,579.3 1382.9,583.4 1381,587.5 1377.3,594.7 1381,600.2 1384.8,605.5 1390.4,607.1 1392.3,613 1392.3,616.6 1403.6,615.9 1411.1,616.6 1409.2,625.1 1399.8,633.4 1392.3,636.8 1386.7,642 1381.8,644.6 1388.5,642.7 1396,640.1 1403.6,636.1 1411.1,630 1418.6,624.4 1422.3,618.8 1424.2,612.3 1429.8,602.5 1437.3,597.9 1431.7,610.8 1437.3,610 1439.2,607.1 1444.8,601.7 1452.3,602.5 1467.3,605.5ZM1420.4,622.3 1427.9,621.6 1429.1,625.8 1423.4,630 1419.7,626.5ZM1355.9,578.4 1362.3,577.6 1367.5,580.9 1364.2,583.4 1358.5,581.8 1355.5,580.9ZM1373.5,604.8 1378,604.8 1378.4,608.6 1374.3,608.6ZM680.1,721.7 683.8,720.2 686.1,723.7 685.3,730.1 683.1,730.6 680.8,731 680.8,726.2ZM684.6,711.1 684.9,716.2 683.8,719.2 681.6,716.7 681.6,713.7ZM695.8,735.8 699.2,734.9 707.8,734.4 706,739.2 706,742 703,741.5 696.2,737.7ZM737.5,747.1 743.1,747.8 748,748.5 747.6,749.8 742.4,750.3 737.5,748.9ZM770.5,749.4 773.1,748 779.1,746.6 776.9,749.8 773.1,751.7 770.9,750.8ZM658.3,728.1 661.3,726.4 662.1,728.1 660.6,729.6ZM691.3,637.4 696.2,634.7 696.6,638.1 695.1,641.4 691.3,640.7ZM686.4,638.7 689.5,638.7 689.5,641.4 687.2,641.4ZM717.6,627.9 719.8,622.3 721,623 719.5,627.2ZM731.5,618.1 736,617.3 736,619.5 731.9,621.6Z"/>
<clipPath id="lc"><use href="#land"/></clipPath>
</defs>
<rect x="582" y="414" width="881" height="592" fill="#89bde8"/>
<g filter="url(#b8)">
<path fill="#74b1e3" d="M1384.8,387 1384.8,475 1437.3,487.9 1482.4,487.9 1482.4,387ZM1212.2,672.9 1268.5,648.5 1317.2,621.6 1362.3,661 1482.4,672.9 1482.4,1008.3 1118.4,1008.3 1092.1,935.6 1024.5,927.9 1002,890.2 949.5,890.2 874.4,1008.3 799.4,1008.3 844.4,860.1 882,813.6 912,844.8 942,875.2 972,837.1 994.5,860.1 1009.5,905.2 1047.1,927.9 1129.6,935.6 1137.1,882.7 1125.9,844.8 1114.6,805.5 1144.6,780.7 1182.2,763.3 1197.2,726.2ZM574.2,607.1 596.8,621.6 604.3,672.9 623,687.1 638,700.7 634.3,704.9 611.8,703.3 608,740.6 619.3,747.5 604.3,772.1 579.9,805.5 578,841 596.8,863.9 619.3,880.8 649.3,877.1 671.8,882.7 679.3,890.2 675.6,912.8 690.6,927.9 686.8,966.8 698.1,1008.3 574.2,1008.3ZM1133.4,745.2 1140.9,716.2 1167.1,695.4 1178.4,700.7 1170.9,735.8 1144.6,752.1ZM1062.1,825.5 1088.3,809.6 1099.6,821.5 1095.8,844.8 1077.1,863.9 1062.1,856.3ZM957,844.8 972,817.6 990.8,813.6 1002,837.1 994.5,867.6 964.5,871.4Z"/>
<path fill="#a3ceef" d="M701.8,387 701.8,494 724.3,511.5 761.9,511.5 806.9,538 814.4,566.3 874.4,547.9 912,557.3 1024.5,494 1137.1,517.1 1249.7,533 1324.8,543 1369.8,566.3 1399.8,557.3 1399.8,500 1362.3,481.5 1306,468.3 1249.7,423.2 1174.7,387ZM634.3,618.1 645.5,599.4 664.3,595.5 683.1,618.1 698.1,635.4 709.3,635.4 724.3,607.1 720.6,575 743.1,557.3 761.9,603.3 731.9,645.3 694.3,651.7 664.3,667 641.8,675.8 623,678.7 608,661 615.5,628.6ZM1317.2,552.6 1369.8,552.6 1399.8,575 1418.6,621.6 1388.5,645.3 1362.3,628.6 1339.8,610.8 1324.8,595.5 1317.2,583.4ZM1163.4,654.8 1170.9,607.1 1219.7,607.1 1249.7,587.5 1242.2,628.6 1230.9,642 1204.7,635.4 1182.2,654.8ZM1088.3,721.2 1122.1,726.2 1125.9,754.4 1137.1,763.3 1110.9,797.4 1092.1,809.6 1062.1,817.6 1047.1,809.6 1054.6,833.3 1062.1,852.5 1088.3,867.6 1095.8,890.2 1088.3,909 1095.8,924.1 1043.3,916.5 1017,871.4 1020.8,837.1 1039.6,844.8 1047.1,825.5 1069.6,801.5 1092.1,772.1ZM1110.9,954.9 1122.1,931.7 1140.9,924.1 1155.9,909 1170.9,920.3 1185.9,926 1197.2,939.4 1182.2,958.9 1159.6,954.9 1137.1,951Z"/>
</g>
<path fill="#74b1e3" filter="url(#b3)" d="M630.5,747.5 649.3,745.2 660.6,735.8 660.6,716.2 683.1,703.3 701.8,695.4 724.3,716.2 739.4,721.2 750.6,726.2 761.9,740.6 786.3,740.6 786.3,767.7 724.3,772.1 686.8,758.9 686.8,738.2 649.3,749.8Z"/>
<use href="#land" fill="none" stroke="#a9d3f1" stroke-width="5" stroke-linejoin="round" filter="url(#b1)" opacity=".9"/>
<use href="#land" fill="#f4f0e4"/>
<g clip-path="url(#lc)">
<g filter="url(#b3)">
<path fill="#dbebd0" d="M919.5,809.6 927,789.1 934.5,772.1 942,767.7 949.5,776.4 964.5,782.8 979.5,787 983.3,805.5 972,813.6 949.5,833.3 942,860.1 934.5,856.3 923.2,829.4ZM1039.6,758.9 1047.1,735.8 1062.1,723.7 1084.6,718.7 1103.4,721.2 1110.9,735.8 1099.6,758.9ZM835,935.6 838.8,951 829.4,983 823.8,989.2 821.9,974.9 827.5,954.9 831.3,939.4ZM945.7,850.6 958.9,850.6 958.9,869.5 945.7,869.5Z"/>
<path fill="#d2e7c6" d="M581.8,835.2 611.8,835.2 649.3,839.1 686.8,842.9 724.3,846.8 754.4,850.6 773.1,856.3 776.9,875.2 761.9,882.7 761.9,897.7 761.9,920.3 773.1,927.9 784.4,935.6 802.4,929.8 803.2,951 782.5,966.8 761.9,958.9 731.9,954.9 701.8,951 694.3,939.4 700,924.1 694.3,909 683.1,894 684.9,877.1 679.3,874 664.3,866.9 638,871.8 619.3,874.4 600.5,860.1 585.5,844.8Z"/>
<path fill="#d3e7c9" d="M788.1,701.8 799.4,706 814.4,711.1 829.4,718.7 831.3,723.7 818.2,721.2 803.2,718.7 791.9,708.6ZM761.9,719.7 784.4,717.2 803.2,719.7 803.2,724.7 784.4,723.7 761.9,724.7ZM746.9,726.2 761.9,726.2 761.9,740.6 750.6,741.5ZM831.3,732 836.9,740.6 851.9,742.4 859.4,738.2 851.9,739.2 838.8,736.8ZM820,742.9 829.4,749.8 836.9,761.1 844.4,769.9 848.2,776.4 842.6,774.3 835,763.3 825.7,754.4 818.2,747.5ZM882,749.8 897,742.9 912,743.8 919.5,752.1 908.2,756.7 897,754.4 882,754.4ZM912,754.4 927,752.1 932.6,767.7 919.5,776.4 912,769.9ZM615.5,707 660.6,711.1 660.6,718.7 641.8,718.7 616.3,721.2Z"/>
<path fill="#c8e2c6" d="M604.3,607.1 664.3,591.6 705.6,522.5 754.4,517.1 780.6,529.9 803.2,547.9 814.4,554.5 836.9,545.9 866.9,545 889.5,547.9 904.5,551.7 919.5,552.6 934.5,543 949.5,529.9 964.5,524.6 972,521.4 994.5,522.5 1024.5,505.8 1043.3,496.4 1062.1,502.4 1080.8,505.8 1099.6,508.1 1114.6,511.5 1125.9,517.1 1137.1,527.8 1155.9,522.5 1174.7,517.1 1193.4,513.8 1212.2,519.3 1230.9,527.8 1242.2,533 1249.7,543 1249.7,566.3 1257.2,583.4 1272.2,591.6 1268.5,621.6 1242.2,672.9 1212.2,700.7 1200.9,721.2 1185.9,754.4 1155.9,772.1 1129.6,772.1 1118.4,745.2 1107.1,733.4 1092.1,726.2 1077.1,716.2 1092.1,700.7 1099.6,684.3 1088.3,672.9 1062.1,675.8 1035.8,672.9 1017,667 1005.8,671.7 987,672.9 972,675.8 964.5,667 949.5,661 934.5,648.5 912,642 889.5,645.3 874.4,651.7 855.7,661 836.9,664 818.2,672.9 806.9,681.5 799.4,687.1 784.4,689.9 769.4,689.9 761.9,695.4 756.2,706 752.5,716.2 746.9,721.2 731.9,726.2 724.3,726.2 722.5,716.2 705.6,703.3 700,696.4 695.5,700.7 698.1,708.6 707.5,718.7 711.2,726.2 707.5,733.4 694.3,718.7 686.8,706 675.6,706 660.6,708.6 653.1,713.2 641.8,711.1 613.7,711.1 611.8,706 604.3,672.9ZM979.5,784.9 994.5,780.7 1013.3,776.4 1035.8,763.3 1054.6,754.4 1077.1,752.1 1095.8,749.8 1114.6,754.4 1114.6,813.6 1129.6,833.3 1129.6,871.4 1155.9,886.4 1219.7,901.5 1223.4,931.7 1137.1,929.1 1080.8,929.1 1039.6,920.3 1002,871.4 994.5,833.3 987,809.6 979.5,805.5ZM972,667 994.5,661 1024.5,664 1032.1,681.5 1017,689.9 994.5,687.1 975.8,681.5ZM1388.5,547.9 1418.6,540 1467.3,538 1467.3,607.1 1444.8,603.3 1422.3,621.6 1399.8,642 1381,648.5 1381,640.7 1399.8,630 1407.3,621.6 1396,614.4 1396,591.6 1388.5,579.3 1399.8,566.3 1388.5,557.3ZM1189.7,517.1 1212.2,514.9 1230.9,522.5 1242.2,533 1242.2,552.6 1230.9,566.3 1219.7,570.7 1204.7,566.3 1193.4,552.6 1185.9,533ZM1236.6,664 1244.1,654.8 1251.6,642 1257.2,628.6 1253.5,614.4 1244.1,621.6 1236.6,635.4 1234.7,654.8ZM1183.3,930.6 1191.5,943.3 1197.9,958.9 1210.3,970.8 1224.6,987.1 1224.9,1004 1217.8,1004 1212.2,987.1 1200.9,970.8 1193.4,958.9 1186.7,945.2 1182.2,931.7ZM782.5,842.9 791.9,841 795.6,852.5 790,863.9 782.5,862Z"/>
<path fill="#bedcb6" d="M684.9,878.9 694.3,873.3 709.3,873.3 724.3,872.2 743.1,873.3 754.4,877.1 760,886.4 758.1,897.7 754.4,907.1 743.1,910.9 724.3,912 713.1,910.9 701.8,909 694.3,907.1 686.8,899.6 683.1,892.1Z"/>
<path fill="#c7e3d0" d="M866.9,494 866.9,607.1 912,618.1 968.3,621.6 1024.5,628.6 1080.8,628.6 1137.1,621.6 1174.7,607.1 1249.7,607.1 1268.5,494Z"/>
</g>
<g filter="url(#b2)">
<path fill="#fff" d="M746.9,494 754.4,513.8 773.1,524.6 791.9,535 803.2,546.9 814.4,551.7 829.4,544 855.7,542 882,544 897,547.9 912,545.9 927,540 942,533 957,525.7 972,521.4 979.5,533 987,547.9 998.3,554.5 1009.5,552.6 1017,538 1009.5,522.5 1020.8,514.9 1039.6,514.9 1054.6,517.1 1069.6,521.4 1084.6,524.6 1099.6,525.7 1114.6,527.8 1122.1,522.5 1129.6,524.6 1129.6,387 746.9,387ZM1129.6,468.3 1129.6,522.5 1148.4,519.3 1167.1,513.8 1185.9,510.4 1204.7,510.4 1219.7,513.8 1234.7,519.3 1245.9,527.8 1249.7,547.9 1242.2,566.3 1242.2,587.5 1249.7,593.2 1261,587.5 1268.5,583.4 1276,607.1 1294.7,607.1 1324.8,591.6 1369.8,575 1369.8,547.9 1324.8,505.8 1249.7,487.9 1174.7,461.4ZM1124,519.3 1140.9,519.3 1148.4,552.6 1159.6,568.1 1174.7,576.7 1189.7,583.4 1200.9,595.5 1197.2,605.5 1178.4,601 1159.6,593.2 1144.6,583.4 1131.5,566.3 1124,543ZM1163.4,527.8 1180.3,525.7 1193.4,547.9 1208.4,566.3 1221.6,583.4 1215.9,593.2 1197.2,581.8 1182.2,564.5 1169,547.9ZM669.9,612.3 667.3,599.4 668.1,590 675.6,581.8 686.8,570.7 694.3,557.3 700,540 709.3,525.7 722.5,513.8 743.1,501.2 760,505.8 754.4,514.9 743.1,520.4 731.9,527.8 720.6,535 710.1,551.7 702.6,569.8 694.3,586.7 684.9,597.9 679.3,607.1 675.6,613ZM910.1,733.4 917.6,713.7 934.5,708 957,708 975.8,715.2 979.5,728.6 994.5,731 1013.3,733.4 1028.3,742.9 1032.1,758.9 1026.4,774.3 1017,781.5 1002,778.6 987,781.5 972,781.5 957,774.3 945.7,765.5 936.4,754.4 925.1,747.5 915.7,743.8ZM1362.3,494 1474.8,494 1474.8,535 1418.6,538 1388.5,545 1388.5,557.3 1399.8,566.3 1388.5,578.4 1394.2,591.6 1394.2,610.8 1362.3,614.4ZM1242.2,657.9 1249.7,645.3 1255.3,632 1253.5,625.1 1247.8,635.4 1241.4,648.5ZM675.6,692.1 681.2,689.9 686.8,690.4 684.9,694.3 677.4,695.9Z"/>
<path fill="#dfe4ef" d="M960.8,747.5 979.5,745.2 990.8,752.1 987,763.3 972,767.7 960.8,761.1Z"/>
<path fill="#c8e2c6" d="M1189.7,517.1 1212.2,514.9 1230.9,522.5 1242.2,533 1242.2,552.6 1230.9,566.3 1219.7,570.7 1204.7,566.3 1193.4,552.6 1185.9,533Z"/>
</g>
</g>
<path fill="#fff" d="M566.7,553.5 581.8,552.6 589.3,552.6 594.5,554.5 598.3,561.8 597.9,567.2 593,572.4 587.4,576.7 579.9,580.1 566.7,576.7ZM700,387 701.8,414.7 707.5,423.2 712,431.4 714.2,424.9 713.1,416.4 718,414.7 719.1,402.2 728.1,400.4 727.4,414.7 733.7,419 739.4,413 743.1,400.4 739.4,387 716.8,377ZM865.1,510.4 855.7,509.3 850.1,505.8 842.6,496.4 844.4,487.9 848.2,478.9 853.8,472.4 855.7,464.2 859.4,454.3 866.9,443.9 878.2,434.6 893.2,426.5 906.3,423.2 907.8,429.8 897,439.3 883.8,449.9 874.4,461.4 868.8,471 863.2,481.5 859.4,491.6 857.6,500 863.2,507ZM830.5,524.6 835,522.5 838.1,526.8 835,530.9 831.3,529.9ZM869.6,513.8 875.2,513.8 876.3,519.3 871.4,520.4ZM910.1,476.3 917.6,475 917.6,480.2 911.2,480.2ZM1165.3,440.8 1170.9,436.2 1178.4,437.7 1185.9,442.4 1195.3,446.9 1197.2,452.8 1187.8,455.7 1178.4,457.1 1169,458.6 1164.5,449.9ZM1200.2,448.4 1208.4,449.9 1215.2,452.8 1210.3,457.1 1200.9,455.7ZM1173.9,476.3 1180.3,469.7 1187.8,473.7 1185.9,478.9 1176.5,480.2ZM1319.5,503.5 1324.8,499.4 1332.3,501.2 1334.5,504.7 1328.5,507.6 1321,507ZM1355.9,578.4 1362.3,577.6 1367.5,580.9 1364.2,583.4 1358.5,581.8 1355.5,580.9ZM1373.5,604.8 1378,604.8 1378.4,608.6 1374.3,608.6Z"/>
<path fill="#70aee2" stroke="#a4cfef" stroke-width="1.2" d="M758.1,720.2 754.4,716.7 752.9,713.7 754.4,710.1 757,704.9 760.7,699.6 764.5,692.6 767.5,692.1 769.4,693.7 772,694.8 775.4,694.8 771.3,698.6 774.6,702.8 776.9,703.9 782.1,700.7 786.3,699.1 787.4,700.2 789.3,701.2 791.1,702.3 795.6,705.4 798.3,708 803.2,711.1 805.8,715.7 805.4,718.2 798.3,721.2 793.4,721.7 785.5,719.7 781.4,716.2 775,716.2 768.6,719.2 763,720.2ZM786.3,698.6 781.8,698.6 780.6,696.4 779.9,694.3 787.4,691.5 790,689.3 795.3,688.8 796.8,689.3 793,691.5 791.9,695.4 790.8,697 789.6,699.1 787.4,698.6ZM750.6,723.5 754.4,721.2 758.1,721.2 761.5,722.5 758.1,724.2 754.4,724.2 750.6,724.2ZM827.5,695.4 833.2,692.6 840.7,690.4 848.2,691.5 848.2,699.1 841.8,699.6 840.7,703.3 838.1,703.9 841.4,708 840.7,712.2 845.9,712.2 847.1,717.2 848.2,721.2 847.8,726.2 850.4,728.6 851.6,738.2 851.9,741 846.3,742 840.7,742 835,738.2 832.8,733.9 834.3,729.6 838.4,724.2 835.4,723.2 833.2,718.7 830.5,716.2 827.5,711.1 827.5,706 824.9,701.8 825.7,698ZM765.3,594.7 769.4,595.5 772.8,599.4 771.3,605.5 766.8,607.4 765.6,604.8 762.6,600.2ZM778.8,586.7 782.5,586.7 785.5,594 784,599.4 779.9,600.2 781.4,594ZM1038.4,664 1042.2,664.3 1047.1,659.8 1052.7,654.8 1057.9,649.1 1061.3,642 1062.1,636.8 1059.1,637.4 1056.8,644 1053.1,650.4 1048.2,654.8 1043.3,659.1ZM768.6,891.3 772.4,888.7 777.6,889.4 779.5,893.2 776.5,897.7 773.1,900.7 769.4,900 768.3,895.8ZM758.5,903 760.7,903.3 761.5,909 764.5,915.8 766,922.6 763.8,923 760.4,915.8 758.9,909ZM776.9,926.4 779.1,926.4 780.3,933.6 781.4,941.3 781.4,944.4 779.1,944 778,935.6 776.9,929.8ZM696.2,613 701.1,612.3 701.8,616.6 698.1,618.8 696.2,616.6Z"/>
<g font-style="italic" fill="#5c8fd3" font-size="15.5" text-anchor="middle">
<text x="593" y="641">кий</text>
<text x="917" y="935">Индийский</text><text x="917" y="952">океан</text>
<text x="1425" y="958">Тихий</text><text x="1425" y="975">океан</text>
</g>
<text x="708" y="872" font-size="15" fill="#b3a99b" letter-spacing="4.2">АФРИКА</text>
<text x="1088" y="985" font-size="15" fill="#b3a99b" letter-spacing="4.6">АВСТРАЛИЯ</text>
<g filter="url(#sh)">
<rect x="611.5" y="590" width="7" height="205" fill="#cfe0f0" opacity=".75"/>
<rect x="614" y="590" width="2" height="205" fill="#f4f8fc" opacity=".9"/>
<rect x="596.5" y="557" width="35.5" height="36" rx="3" fill="#fff"/>
<rect x="596.5" y="792" width="35.5" height="36" rx="3" fill="#fff"/>
<rect x="596.5" y="755" width="35.5" height="19" rx="3" fill="#fff"/>
</g>
<path d="M605 573h19v4h-19zM612.5 565.5h4v19h-4z" fill="#4d4d4d"/>
<path d="M605 808h19v4h-19z" fill="#4d4d4d"/>
<g fill="#777"><rect x="608.0" y="762.3" width="1.2" height="1.2"/><rect x="608.0" y="765.7" width="1.2" height="1.2"/><rect x="611.4" y="762.3" width="1.2" height="1.2"/><rect x="611.4" y="765.7" width="1.2" height="1.2"/><rect x="614.8" y="762.3" width="1.2" height="1.2"/><rect x="614.8" y="765.7" width="1.2" height="1.2"/><rect x="618.2" y="762.3" width="1.2" height="1.2"/><rect x="618.2" y="765.7" width="1.2" height="1.2"/></g>
<g font-size="17.3" text-anchor="middle" fill="#111">
<circle cx="1140" cy="520" r="31" fill="#fff" opacity=".92"/><circle cx="1140" cy="520" r="24" fill="#fdfdfb" stroke="#3f8df0" stroke-width="7"/><text x="1140" y="526">2</text>
<circle cx="1173" cy="526" r="15.8" fill="#fff" opacity=".92"/><circle cx="1173" cy="526" r="12.2" fill="#fdfdfb" stroke="#3f8df0" stroke-width="4.2"/>
<circle cx="1271" cy="531" r="31" fill="#fff" opacity=".92"/><circle cx="1271" cy="531" r="24" fill="#fdfdfb" stroke="#3f8df0" stroke-width="7"/><text x="1271" y="537">3</text>
<circle cx="772" cy="534" r="31" fill="#fff" opacity=".92"/><circle cx="772" cy="534" r="24" fill="#fdfdfb" stroke="#3f8df0" stroke-width="7"/><text x="772" y="540">10</text>
<circle cx="946" cy="538" r="31" fill="#fff" opacity=".92"/><circle cx="946" cy="538" r="24" fill="#fdfdfb" stroke="#3f8df0" stroke-width="7"/><text x="946" y="544">3</text>
<circle cx="877" cy="539" r="31" fill="#fff" opacity=".92"/><circle cx="877" cy="539" r="24" fill="#fdfdfb" stroke="#3f8df0" stroke-width="7"/><text x="877" y="545">3</text>
<circle cx="1326" cy="555" r="15.8" fill="#fff" opacity=".92"/><circle cx="1326" cy="555" r="12.2" fill="#fdfdfb" stroke="#3f8df0" stroke-width="4.2"/>
<circle cx="1204" cy="593" r="31" fill="#fff" opacity=".92"/><circle cx="1204" cy="593" r="24" fill="#fdfdfb" stroke="#3f8df0" stroke-width="7"/><text x="1204" y="599">10</text>
<circle cx="1116" cy="596" r="31" fill="#fff" opacity=".92"/><circle cx="1116" cy="596" r="24" fill="#fdfdfb" stroke="#3f8df0" stroke-width="7"/><text x="1116" y="602">19</text>
<circle cx="1271" cy="608" r="31" fill="#fff" opacity=".92"/><circle cx="1271" cy="608" r="24" fill="#fdfdfb" stroke="#3f8df0" stroke-width="7"/><text x="1271" y="614">3</text>
<circle cx="942" cy="613" r="31" fill="#fff" opacity=".92"/><circle cx="942" cy="613" r="24" fill="#fdfdfb" stroke="#3f8df0" stroke-width="7"/><text x="942" y="619">43</text>
<circle cx="794" cy="668" r="31" fill="#fff" opacity=".92"/><circle cx="794" cy="668" r="24" fill="#fdfdfb" stroke="#3f8df0" stroke-width="7"/><text x="794" y="674">448</text>
<circle cx="786" cy="618" r="31" fill="#fff" opacity=".92"/><circle cx="786" cy="618" r="24" fill="#fdfdfb" stroke="#3f8df0" stroke-width="7"/><text x="786" y="624">183</text>
<circle cx="856" cy="619" r="31" fill="#fff" opacity=".92"/><circle cx="856" cy="619" r="24" fill="#fdfdfb" stroke="#3f8df0" stroke-width="7"/><text x="856" y="625">166</text>
<circle cx="1008" cy="623" r="31" fill="#fff" opacity=".92"/><circle cx="1008" cy="623" r="24" fill="#fdfdfb" stroke="#3f8df0" stroke-width="7"/><text x="1008" y="629">28</text>
<circle cx="721" cy="650" r="31" fill="#fff" opacity=".92"/><circle cx="721" cy="650" r="24" fill="#fdfdfb" stroke="#3f8df0" stroke-width="7"/><text x="721" y="656">10</text>
<circle cx="955" cy="651" r="31" fill="#fff" opacity=".92"/><circle cx="955" cy="651" r="24" fill="#fdfdfb" stroke="#3f8df0" stroke-width="7"/><text x="955" y="657">102</text>
<circle cx="1252" cy="653" r="31" fill="#fff" opacity=".92"/><circle cx="1252" cy="653" r="24" fill="#fdfdfb" stroke="#3f8df0" stroke-width="7"/><text x="1252" y="659">5</text>
<circle cx="1026" cy="657" r="31" fill="#fff" opacity=".92"/><circle cx="1026" cy="657" r="24" fill="#fdfdfb" stroke="#3f8df0" stroke-width="7"/><text x="1026" y="663">68</text>
<circle cx="841" cy="660" r="31" fill="#fff" opacity=".92"/><circle cx="841" cy="660" r="24" fill="#fdfdfb" stroke="#3f8df0" stroke-width="7"/><text x="841" y="666">270</text>
<circle cx="1123" cy="681" r="31" fill="#fff" opacity=".92"/><circle cx="1123" cy="681" r="24" fill="#fdfdfb" stroke="#3f8df0" stroke-width="7"/><text x="1123" y="687">58</text>
<circle cx="1172" cy="682" r="31" fill="#fff" opacity=".92"/><circle cx="1172" cy="682" r="24" fill="#fdfdfb" stroke="#3f8df0" stroke-width="7"/><text x="1172" y="688">28</text>
</g>
<g filter="url(#sh)"><rect x="593" y="965.5" width="229" height="30.5" rx="3.5" fill="#fff"/></g>
<path d="M610.5 970.2c-5 0-8.8 3.8-8.8 8.6 0 5.5 6.6 8.2 8.3 13.6.2.6.8.6 1 0 1.7-5.4 8.3-8.1 8.3-13.6 0-4.8-3.8-8.6-8.8-8.6z" fill="#f0523c"/><circle cx="610.5" cy="978.8" r="3.1" fill="#fff"/>
<text x="628" y="986" font-size="15.6" fill="#1a1a1a" textLength="187" lengthAdjust="spacingAndGlyphs">Открыть в Яндекс.Картах</text>
<rect x="833" y="970.5" width="172" height="21" rx="3" fill="#e3f0fa" opacity=".85"/>
<text x="838.5" y="986" font-size="16" fill="#1a1a1a" text-decoration="underline" textLength="162" lengthAdjust="spacingAndGlyphs">Создать свою карту</text>
<rect x="1193" y="975.5" width="268" height="19.5" rx="3" fill="#eaf3fb" opacity=".88"/>
<text x="1198" y="990.5" font-size="14.6" fill="#1a1a1a" textLength="72" lengthAdjust="spacingAndGlyphs">© Яндекс</text>
<text x="1275" y="990.5" font-size="14.6" fill="#1a1a1a" text-decoration="underline" textLength="179" lengthAdjust="spacingAndGlyphs">Условия использования</text>
</svg>
<!--/MAP--></div>
</body>
</html>
